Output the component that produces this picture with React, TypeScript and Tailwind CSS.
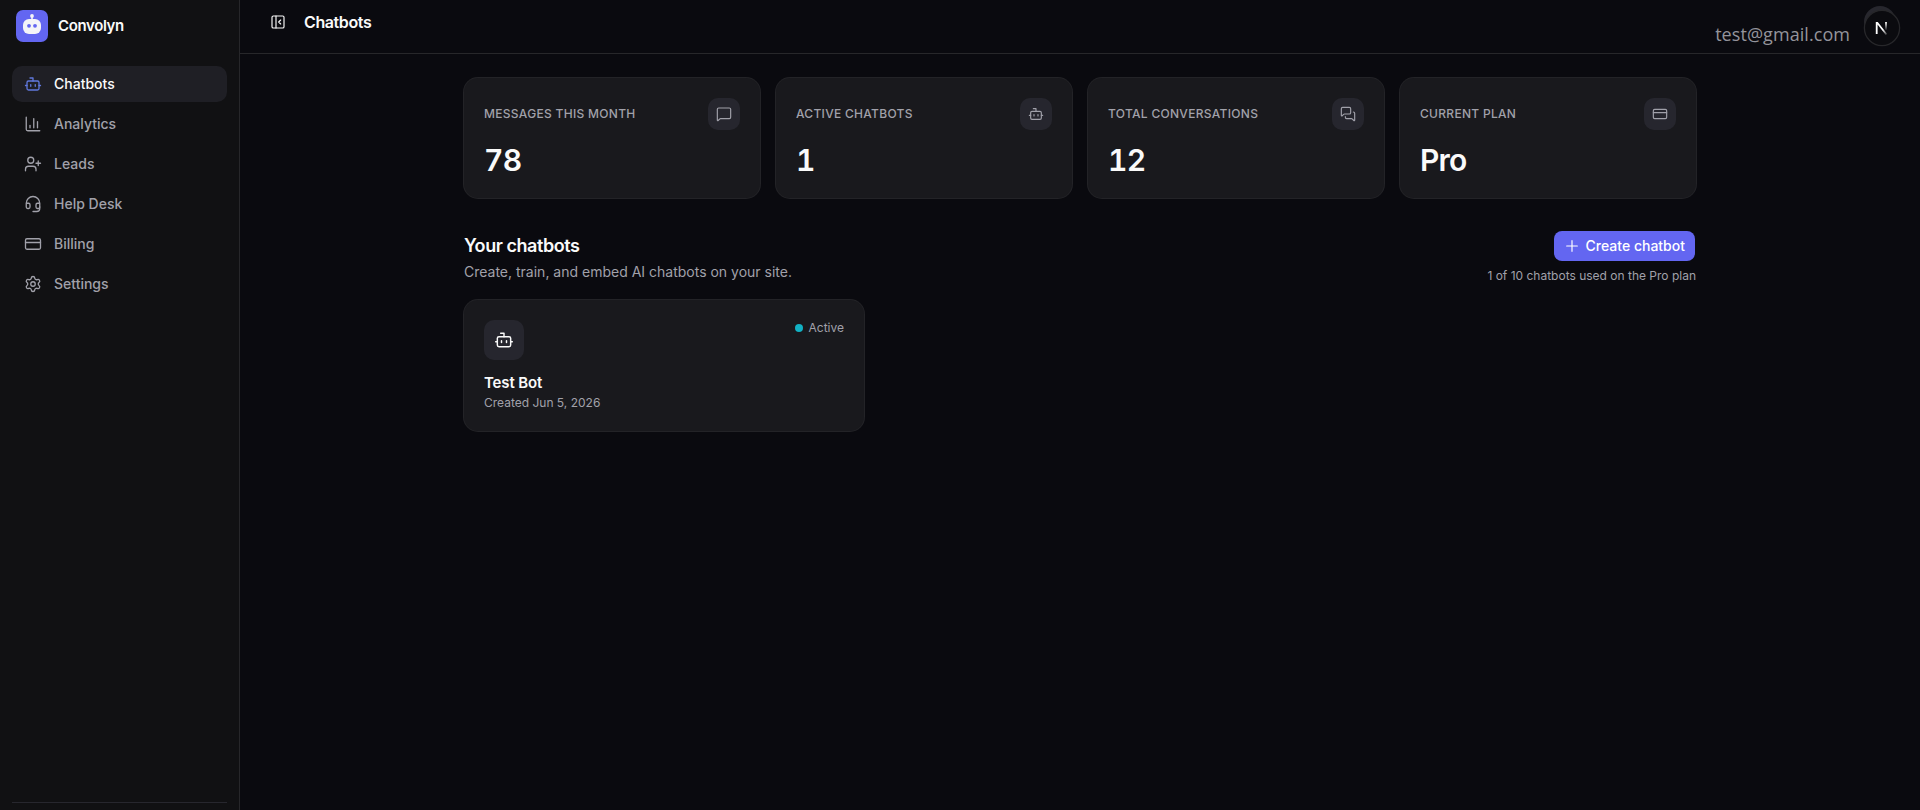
import React from "react";
import {
    BarChart3,
    Bot,
    CreditCard,
    Headset,
    MessageSquare,
    MessagesSquare,
    PanelLeftClose,
    Settings,
    UserPlus,
} from "lucide-react";

const navItems = [
    { label: "Chatbots", icon: Bot, active: true },
    { label: "Analytics", icon: BarChart3 },
    { label: "Leads", icon: UserPlus },
    { label: "Help Desk", icon: Headset },
    { label: "Billing", icon: CreditCard },
    { label: "Settings", icon: Settings },
];

const stats = [
    { label: "Messages this month", value: "78", icon: MessageSquare },
    { label: "Active chatbots", value: "1", icon: Bot },
    { label: "Total conversations", value: "12", icon: MessagesSquare },
    { label: "Current plan", value: "Pro", icon: CreditCard },
];

const Logo = () => (
    <svg width="32" height="32" viewBox="0 0 32 32" className="shrink-0">
        <rect width="32" height="32" rx="7" fill="#6366f1" />
        <circle cx="16" cy="5.9" r="1.9" fill="#f4f4f8" />
        <rect x="15.2" y="7" width="1.6" height="3" fill="#f4f4f8" />
        <rect x="7" y="9" width="18" height="15" rx="6" fill="#f4f4f8" />
        <circle cx="13" cy="15.8" r="1.9" fill="#6366f1" />
        <circle cx="19" cy="15.8" r="1.9" fill="#6366f1" />
    </svg>
);

const Sidebar = () => (
    <aside className="flex w-60 shrink-0 flex-col border-r border-[#27272a] bg-[#111113]">
        <div className="flex h-[54px] items-start gap-2.5 px-4 pt-2.5">
            <Logo />
            <span className="pt-1 text-[15px] leading-6 font-semibold tracking-tight text-[#fafafa]">Convolyn</span>
        </div>
        <nav className="flex flex-1 flex-col gap-1 p-3">
            {navItems.map(({ label, icon: Icon, active }) => (
                <a
                    key={label}
                    href="#"
                    className={
                        active
                            ? "flex h-9 items-center gap-3 rounded-[10px] bg-[#1f1f25] px-3 text-sm font-medium text-[#fafafa]"
                            : "flex h-9 items-center gap-3 rounded-[10px] px-3 text-sm font-medium text-[#a1a1aa]"
                    }
                >
                    <Icon
                        className={active ? "size-[18px] text-[#6078dc]" : "size-[18px]"}
                        strokeWidth={1.75}
                    />
                    {label}
                </a>
            ))}
        </nav>
        <div className="mx-3 h-2 border-t border-[#27272e]" />
    </aside>
);

const Avatar = () => (
    <div className="relative size-9">
        <div className="absolute top-0 left-0 size-8 rounded-full bg-[#27272e]" />
        <svg width="38" height="38" viewBox="0 0 38 38" className="absolute top-[3px] -left-px">
            <defs>
                <linearGradient id="stem" x1="0" y1="0" x2="0" y2="1">
                    <stop offset="0%" stopColor="#fff" />
                    <stop offset="100%" stopColor="#fff" stopOpacity="0" />
                </linearGradient>
                <linearGradient id="diag" x1="0" y1="0" x2="1" y2="1">
                    <stop offset="60%" stopColor="#fff" />
                    <stop offset="100%" stopColor="#fff" stopOpacity="0.1" />
                </linearGradient>
            </defs>
            <circle cx="19" cy="19" r="17.6" fill="#0b0b0f" stroke="#27272a" strokeWidth="1.3" />
            <path d="M12.8 25V13h2l9.4 12-1.4 1L14.6 15.6V25z" fill="url(#diag)" />
            <rect x="22.1" y="13" width="1.8" height="8.5" fill="url(#stem)" />
        </svg>
    </div>
);

const Header = () => (
    <header className="flex h-[54px] items-start justify-between border-b border-[#27272a] pr-5 pl-[30px]">
        <div className="flex items-center gap-[18px] pt-2.5">
            <PanelLeftClose className="size-4 text-[#fafafa]" strokeWidth={1.75} />
            <h1 className="text-base leading-6 font-semibold tracking-tight text-[#fafafa]">Chatbots</h1>
        </div>
        <div className="flex items-start gap-3.5 pt-1.5">
            <span className="pt-4 font-['Open_Sans',sans-serif] text-[18px] leading-6 tracking-[0.06px] text-[#94949b]">test@gmail.com</span>
            <Avatar />
        </div>
    </header>
);

const StatCard = ({ label, value, icon: Icon }: (typeof stats)[number]) => (
    <div className="h-[120px] rounded-[14px] bg-[#19191d] p-5 ring-1 ring-[#232327]">
        <div className="flex items-center justify-between">
            <span className="text-xs font-medium tracking-wide text-[#a1a1aa] uppercase">{label}</span>
            <span className="flex size-8 items-center justify-center rounded-[10px] bg-[#26262e] text-[#a1a1aa]">
                <Icon className="size-4" strokeWidth={1.75} />
            </span>
        </div>
        <p className="mt-3 text-3xl leading-9 font-semibold tracking-tight text-[#fafafa] tabular-nums">{value}</p>
    </div>
);

const BotCard = () => (
    <div className="h-[131px] rounded-[14px] bg-[#19191d] p-5 ring-1 ring-[#232327]">
        <div className="flex items-start justify-between">
            <span className="flex size-10 items-center justify-center rounded-[10px] bg-[#26262e] text-[#fafafa]">
                <Bot className="size-5" strokeWidth={1.75} />
            </span>
            <span className="flex items-center gap-1.5 text-xs text-[#a1a1aa]">
                <span className="size-2 rounded-full bg-[#12b1c4]" />
                Active
            </span>
        </div>
        <h3 className="mt-3 text-[15px] leading-[22px] font-semibold tracking-[-0.01em] text-[#fafafa]">Test Bot</h3>
        <p className="mt-px text-xs text-[#a1a1aa]">Created Jun 5, 2026</p>
    </div>
);

const App = () => {
    return (
        <div className="flex h-[810px] overflow-hidden bg-[#0a0a0f] font-['Inter',sans-serif]">
            <Sidebar />
            <div className="flex min-w-0 flex-1 flex-col">
                <Header />
                <main className="mx-auto w-full max-w-7xl p-6">
                    <section className="grid grid-cols-4 gap-4">
                        {stats.map((stat) => (
                            <StatCard key={stat.label} {...stat} />
                        ))}
                    </section>

                    <section className="mt-8 flex items-start justify-between">
                        <div className="pt-0.5">
                            <h2 className="text-lg leading-7 font-semibold tracking-tight text-[#fafafa]">Your chatbots</h2>
                            <p className="mt-0.5 text-sm text-[#a1a1aa]">Create, train, and embed AI chatbots on your site.</p>
                        </div>
                        <div className="flex flex-col items-end gap-[7px] pt-px">
                            <button className="mr-px flex h-[30px] items-center gap-1.5 rounded-lg bg-[#6366f1] px-2.5 text-sm font-medium text-white">
                                <svg viewBox="0 0 24 24" fill="none" stroke="currentColor" strokeWidth="1.75" strokeLinecap="round" className="size-4">
                                    <path d="M4 12h16M12 4v16" />
                                </svg>
                                Create chatbot
                            </button>
                            <p className="text-xs text-[#a1a1aa]">1 of 10 chatbots used on the Pro plan</p>
                        </div>
                    </section>

                    <section className="mt-4 grid grid-cols-3 gap-4">
                        <BotCard />
                    </section>
                </main>
            </div>
        </div>
    );
};

export default App;
